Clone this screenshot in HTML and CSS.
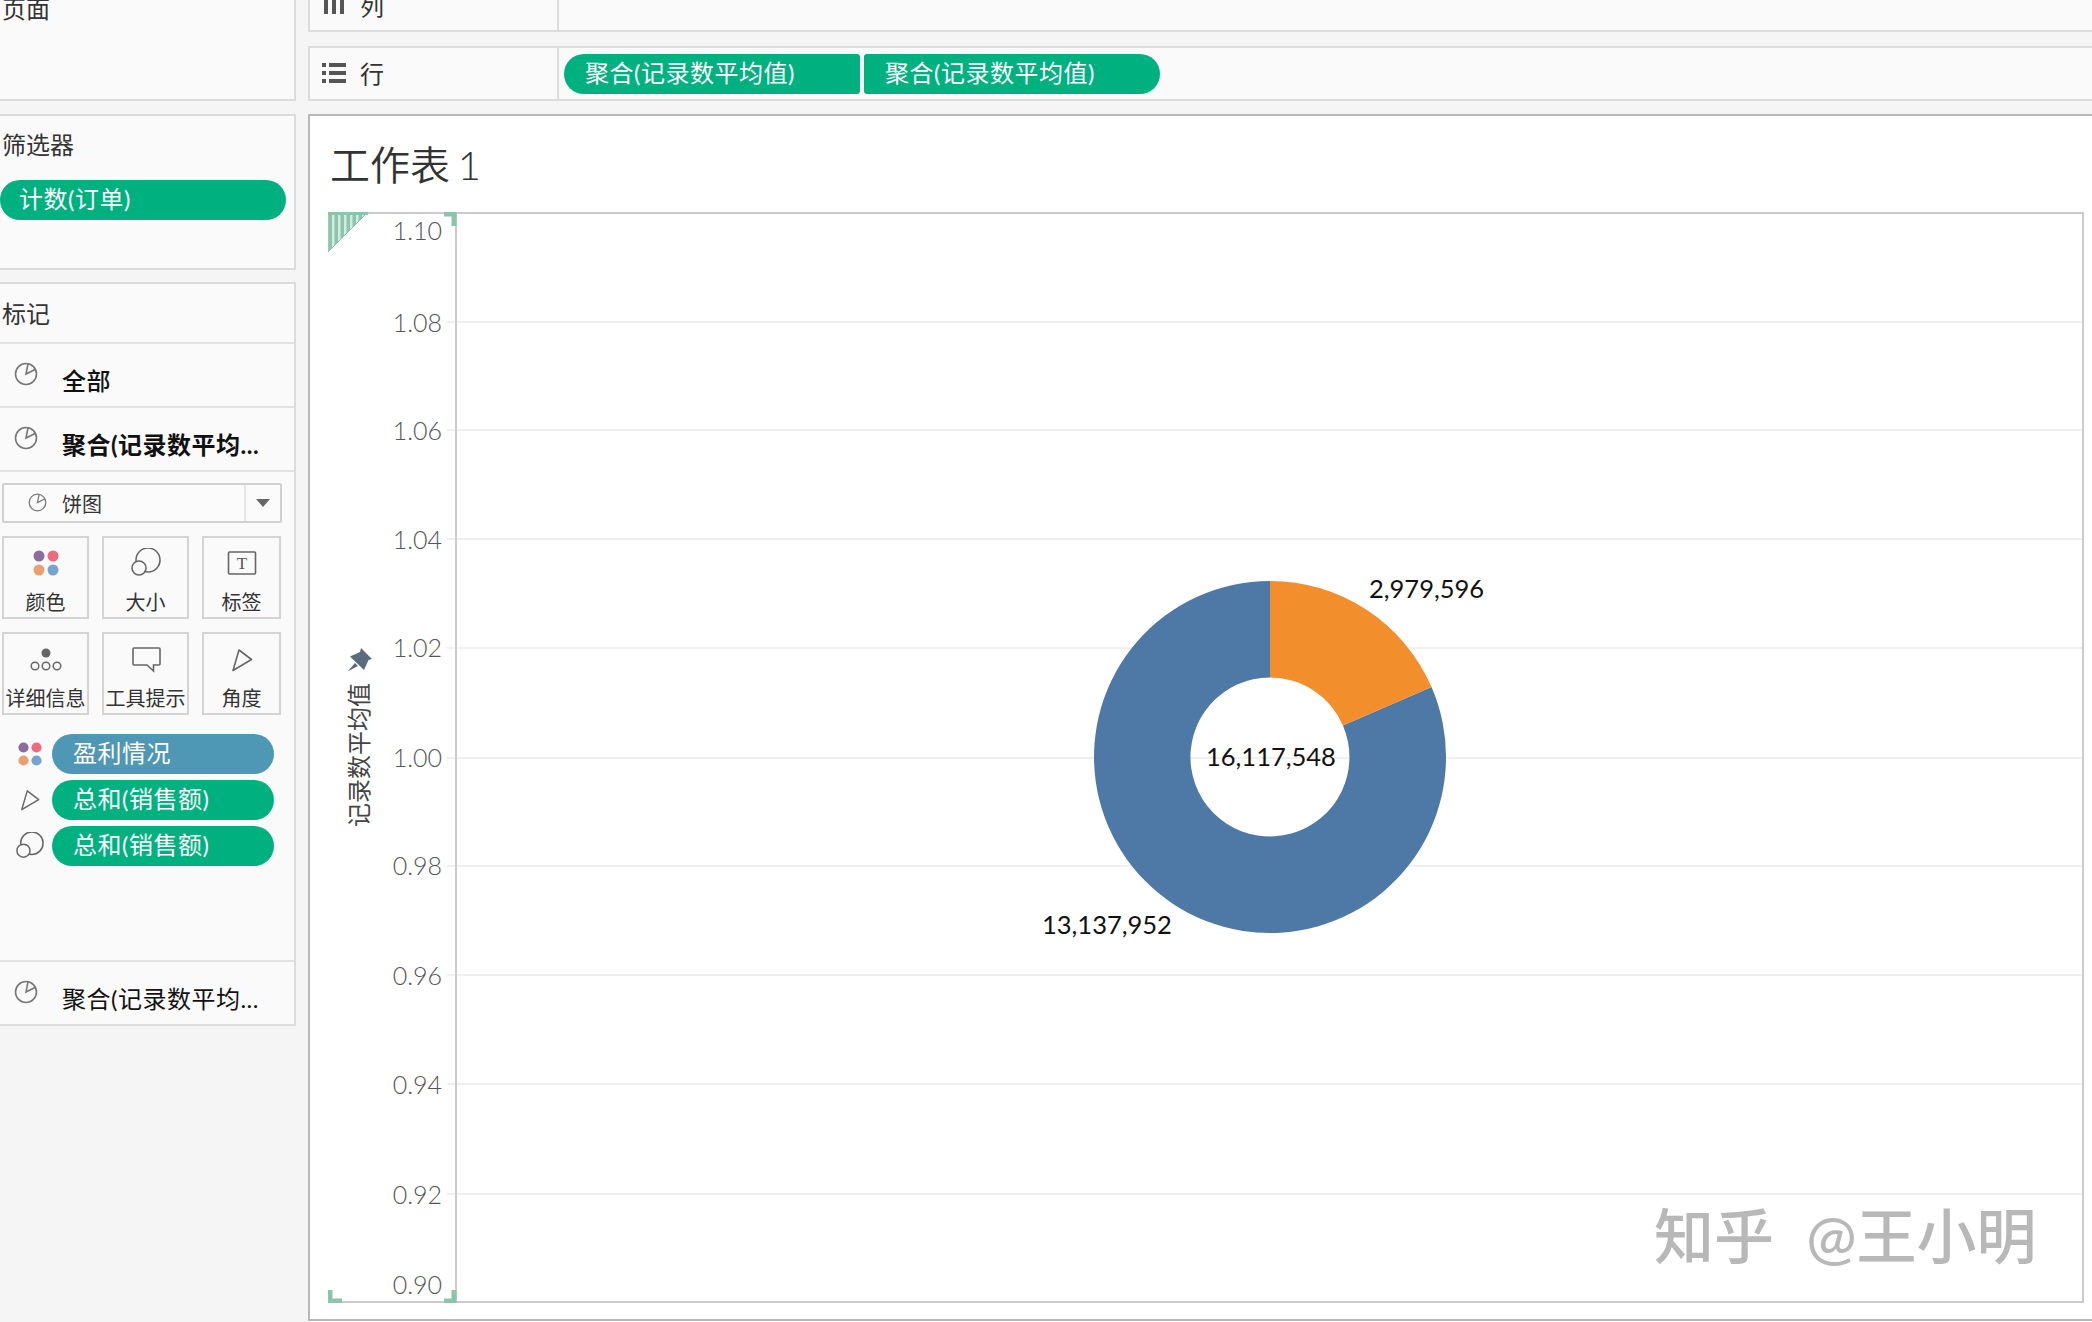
FILE: index.html
```html
<!DOCTYPE html>
<html lang="zh-CN">
<head>
  <meta charset="UTF-8" />
  <title>工作表 1</title>
  <link rel="stylesheet" href="styles.css">
</head>
<body>
  <svg class="icon-defs" xmlns="http://www.w3.org/2000/svg">
    <symbol id="i-pie" viewBox="0 0 24 24">
      <circle cx="12" cy="12" r="10.5" fill="none" stroke="#777" stroke-width="1.6"/>
      <path d="M14 1.8L12 12L21.5 7.2" fill="none" stroke="#777" stroke-width="1.6"/>
    </symbol>
    <symbol id="i-color" viewBox="0 0 28 28">
      <circle cx="7" cy="7" r="5.5" fill="#8a6f9e"/>
      <circle cx="21" cy="7" r="5.5" fill="#ee6a7d"/>
      <circle cx="7" cy="21" r="5.5" fill="#eda06f"/>
      <circle cx="21" cy="21" r="5.5" fill="#78a2cf"/>
    </symbol>
    <symbol id="i-size" viewBox="0 0 30 30">
      <circle cx="17" cy="12" r="12" fill="none" stroke="#666" stroke-width="1.6"/>
      <circle cx="8" cy="20" r="7" fill="#fafafa" stroke="#666" stroke-width="1.6"/>
    </symbol>
    <symbol id="i-angle" viewBox="0 0 24 26">
      <path d="M3 23.5L9 3L21.5 12.5Z" fill="none" stroke="#666" stroke-width="1.6" stroke-linejoin="round"/>
    </symbol>
  </svg>

  <div class="app">
    <aside class="sidebar">
      <section class="panel panel-pages">
        <div class="panel-title">页面</div>
      </section>

      <section class="panel panel-filters">
        <div class="panel-title">筛选器</div>
        <div class="pill pill-filter">计数(订单)</div>
      </section>

      <section class="panel panel-marks">
        <div class="marks-head panel-title">标记</div>
        <div class="marks-row">
          <svg class="row-icon"><use href="#i-pie"/></svg>
          <span class="row-text row-all">全部</span>
        </div>
        <div class="marks-row">
          <svg class="row-icon"><use href="#i-pie"/></svg>
          <span class="row-text row-active">聚合(记录数平均...</span>
        </div>

        <div class="marks-body">
          <div class="mark-select">
            <div class="mark-select-value">
              <svg class="select-icon"><use href="#i-pie"/></svg>
              <span>饼图</span>
            </div>
            <div class="mark-select-arrow"></div>
          </div>

          <div class="mark-cards">
            <div class="mark-card">
              <svg class="card-icon" viewBox="0 0 30 30"><use href="#i-color" x="1" y="1" width="28" height="28"/></svg>
              <span>颜色</span>
            </div>
            <div class="mark-card">
              <svg class="card-icon" viewBox="0 0 30 30"><use href="#i-size" width="30" height="30"/></svg>
              <span>大小</span>
            </div>
            <div class="mark-card">
              <svg class="card-icon" viewBox="0 0 30 30">
                <rect x="1.5" y="4" width="27" height="22" rx="1" fill="none" stroke="#666" stroke-width="1.6"/>
                <text class="card-t" x="15" y="21" text-anchor="middle">T</text>
              </svg>
              <span>标签</span>
            </div>
            <div class="mark-card">
              <svg class="card-icon" viewBox="0 0 34 30">
                <circle cx="17" cy="8" r="4.5" fill="#666"/>
                <circle cx="6" cy="21" r="3.8" fill="none" stroke="#666" stroke-width="1.5"/>
                <circle cx="17" cy="21" r="3.8" fill="none" stroke="#666" stroke-width="1.5"/>
                <circle cx="28" cy="21" r="3.8" fill="none" stroke="#666" stroke-width="1.5"/>
              </svg>
              <span>详细信息</span>
            </div>
            <div class="mark-card">
              <svg class="card-icon" viewBox="0 0 30 30">
                <path d="M3 3H28Q29 3 29 4V19Q29 20 28 20H22.5V26L16 20H3Q2 20 2 19V4Q2 3 3 3Z" fill="none" stroke="#666" stroke-width="1.6"/>
              </svg>
              <span>工具提示</span>
            </div>
            <div class="mark-card">
              <svg class="card-icon" viewBox="0 0 30 30"><use href="#i-angle" x="3" y="2" width="24" height="26"/></svg>
              <span>角度</span>
            </div>
          </div>

          <div class="encodings">
            <div class="encoding">
              <svg class="encoding-icon"><use href="#i-color" x="1" y="1" width="26" height="26"/></svg>
              <div class="pill pill-dim">盈利情况</div>
            </div>
            <div class="encoding">
              <svg class="encoding-icon"><use href="#i-angle" x="3" y="2" width="22" height="24"/></svg>
              <div class="pill pill-measure">总和(销售额)</div>
            </div>
            <div class="encoding">
              <svg class="encoding-icon"><use href="#i-size" width="28" height="28"/></svg>
              <div class="pill pill-measure">总和(销售额)</div>
            </div>
          </div>
        </div>

        <div class="marks-row marks-row-last">
          <svg class="row-icon"><use href="#i-pie"/></svg>
          <span class="row-text">聚合(记录数平均...</span>
        </div>
      </section>
    </aside>

    <main class="main">
      <div class="shelf shelf-cols">
        <div class="shelf-label">
          <svg class="shelf-icon" viewBox="0 0 24 20">
            <path d="M2 0h4v20H2zM10 0h4v20h-4zM18 0h4v20h-4z" fill="#555"/>
          </svg>
          <span>列</span>
        </div>
        <div class="shelf-pills"></div>
      </div>

      <div class="shelf shelf-rows">
        <div class="shelf-label">
          <svg class="shelf-icon" viewBox="0 0 24 20">
            <path d="M0 0h4v4H0zM7 0h17v4H7zM0 8h4v4H0zM7 8h17v4H7zM0 16h4v4H0zM7 16h17v4H7z" fill="#555"/>
          </svg>
          <span>行</span>
        </div>
        <div class="shelf-pills">
          <div class="pill pill-measure pill-left">聚合(记录数平均值)</div>
          <div class="pill pill-measure pill-right">聚合(记录数平均值)</div>
        </div>
      </div>

      <section class="view">
        <h1 class="view-title">工作表 1</h1>
        <svg class="plot" viewBox="328 212 1756 1091" xmlns="http://www.w3.org/2000/svg">
          <defs>
            <pattern id="hatch" width="6" height="6" patternUnits="userSpaceOnUse">
              <rect width="6" height="6" fill="#8cc4ad"/>
              <rect x="2" width="2.5" height="6" fill="#d3eadf"/>
            </pattern>
          </defs>

          <g class="grid">
            <line x1="447" x2="2083" y1="322" y2="322"/>
            <line x1="447" x2="2083" y1="430" y2="430"/>
            <line x1="447" x2="2083" y1="539" y2="539"/>
            <line x1="447" x2="2083" y1="648" y2="648"/>
            <line x1="447" x2="2083" y1="758" y2="758"/>
            <line x1="447" x2="2083" y1="866" y2="866"/>
            <line x1="447" x2="2083" y1="975" y2="975"/>
            <line x1="447" x2="2083" y1="1084" y2="1084"/>
            <line x1="447" x2="2083" y1="1194" y2="1194"/>
          </g>

          <path class="frame" d="M328 213H2083V1302H328"/>
          <line class="frame" x1="456" x2="456" y1="212" y2="1302"/>

          <g class="axis-labels">
            <text x="442" y="240">1.10</text>
            <text x="442" y="332">1.08</text>
            <text x="442" y="440">1.06</text>
            <text x="442" y="549">1.04</text>
            <text x="442" y="657">1.02</text>
            <text x="442" y="767">1.00</text>
            <text x="442" y="875">0.98</text>
            <text x="442" y="985">0.96</text>
            <text x="442" y="1094">0.94</text>
            <text x="442" y="1204">0.92</text>
            <text x="442" y="1294">0.90</text>
          </g>

          <text class="axis-title" transform="translate(368 755) rotate(-90)" text-anchor="middle">记录数平均值</text>
          <path d="M361 648L372 659L368.5 660L364 670L350 656.5L360 652ZM355 663L347.5 671.5L358 666Z" fill="#5b6b80"/>

          <path d="M328 212H368L328 252Z" fill="url(#hatch)" stroke="#8cc4ad" stroke-width="1"/>
          <rect class="corner-fill" x="328" y="212" width="40" height="3"/>
          <path class="corner" d="M444 214H454V226"/>
          <path class="corner" d="M330 1290V1301H342"/>
          <path class="corner" d="M444 1301H454V1290"/>

          <path d="M1431.5 687A176 176 0 1 1 1270 581L1270 677.5A79.5 79.5 0 1 0 1342.9 725.4Z" fill="#4e79a7"/>
          <path d="M1270 581A176 176 0 0 1 1431.5 687L1342.9 725.4A79.5 79.5 0 0 0 1270 677.5Z" fill="#f28e2b"/>

          <g class="data-labels">
            <text x="1369" y="598">2,979,596</text>
            <text x="1206" y="766">16,117,548</text>
            <text x="1042" y="934">13,137,952</text>
          </g>

          <text class="watermark" x="1654" y="1259">知乎 @王小明</text>
        </svg>
      </section>
    </main>
  </div>
</body>
</html>
```

FILE: styles.css
```css
* {
  margin: 0;
  padding: 0;
  box-sizing: border-box;
}
body {
  font-family: Lato, "Noto Sans CJK SC", sans-serif;
  background: #f5f5f5;
  color: #333;
  font-size: 24px;
  overflow: hidden;
}
.icon-defs {
  position: absolute;
  width: 0;
  height: 0;
}
.app {
  display: flex;
  gap: 12px;
  height: 1322px;
  overflow: hidden;
}

/* left column */
.sidebar {
  width: 296px;
  flex-shrink: 0;
  display: flex;
  flex-direction: column;
}
.panel {
  background: #fafafa;
  border: 2px solid #dcdcdc;
  border-left: none;
}
.panel-title {
  padding-left: 2px;
  line-height: 34px;
}
.panel-pages {
  height: 101px;
  border-top: none;
}
.panel-pages .panel-title {
  margin-top: -8px;
}
.panel-filters {
  height: 156px;
  margin-top: 13px;
}
.panel-filters .panel-title {
  margin-top: 12px;
}
.panel-marks {
  height: 744px;
  margin-top: 12px;
  display: flex;
  flex-direction: column;
}
.marks-head {
  height: 60px;
  line-height: 60px;
  border-bottom: 2px solid #e3e3e3;
}
.marks-row {
  height: 64px;
  display: flex;
  align-items: center;
  gap: 24px;
  padding-left: 14px;
  border-bottom: 2px solid #e3e3e3;
  color: #111;
}
.marks-row-last {
  height: 64px;
  border-bottom: none;
  border-top: 2px solid #e3e3e3;
}
.row-icon {
  width: 24px;
  height: 24px;
  margin-top: -2px;
}
.row-text {
  margin-top: 8px;
  letter-spacing: 0.5px;
}
.row-all {
  font-weight: 500;
}
.row-active {
  font-weight: 700;
}
.marks-body {
  flex: 1;
  padding: 11px 12px 0 2px;
}
.mark-select {
  height: 40px;
  display: flex;
  background: #fbfbfb;
  border: 2px solid #d0d0d0;
  border-radius: 2px;
  font-size: 20px;
}
.mark-select-value {
  flex: 1;
  display: flex;
  align-items: center;
  gap: 15px;
  padding-left: 24px;
  border-right: 2px solid #e6e6e6;
}
.select-icon {
  width: 19px;
  height: 19px;
  margin-top: -2px;
}
.mark-select-arrow {
  width: 34px;
  position: relative;
}
.mark-select-arrow::after {
  content: "";
  position: absolute;
  left: 10px;
  top: 14px;
  border: 7px solid transparent;
  border-top: 8px solid #666;
  border-bottom: none;
}
.mark-cards {
  display: grid;
  grid-template-columns: 87px 87px 79px;
  grid-auto-rows: 83px;
  gap: 13px;
  margin-top: 13px;
}
.mark-card {
  border: 2px solid #d4d4d4;
  display: flex;
  flex-direction: column;
  align-items: center;
  font-size: 20px;
  line-height: 26px;
  color: #333;
  white-space: nowrap;
}
.card-icon {
  width: 30px;
  height: 30px;
  margin: 10px 0 11px;
  flex-shrink: 0;
}
.mark-card:nth-child(n+4) .card-icon {
  margin: 11px 0 10px;
}
.mark-card:nth-child(4) .card-icon {
  width: 34px;
}
.card-t {
  font-family: "Liberation Serif", serif;
  font-size: 17px;
  fill: #555;
}
.encodings {
  margin-top: 19px;
  display: flex;
  flex-direction: column;
  gap: 6px;
}
.encoding {
  display: flex;
  align-items: center;
  gap: 8px;
  padding-left: 14px;
}
.encoding-icon {
  width: 28px;
  height: 28px;
  flex-shrink: 0;
}

/* pills */
.pill {
  height: 40px;
  line-height: 38px;
  border-radius: 20px;
  color: #fff;
  padding-left: 21px;
  white-space: nowrap;
  letter-spacing: 0.5px;
}
.pill-filter {
  width: 286px;
  margin-top: 18px;
  padding-left: 19px;
  background: #00b180;
}
.pill-measure {
  background: #00b180;
  width: 222px;
}
.pill-dim {
  background: #4e97b5;
  width: 222px;
}
.pill-left {
  width: 296px;
  border-radius: 20px 3px 3px 20px;
}
.pill-right {
  width: 296px;
  border-radius: 3px 20px 20px 3px;
}

/* shelves */
.main {
  flex: 1;
  display: flex;
  flex-direction: column;
  min-width: 0;
}
.shelf {
  display: flex;
  background: #fafafa;
  border-bottom: 2px solid #dcdcdc;
}
.shelf-cols {
  height: 32px;
}
.shelf-rows {
  height: 55px;
  margin-top: 14px;
  border-top: 2px solid #dcdcdc;
}
.shelf-label {
  width: 251px;
  display: flex;
  align-items: center;
  gap: 14px;
  padding-left: 12px;
  border-left: 2px solid #dcdcdc;
  border-right: 2px solid #dcdcdc;
}
.shelf-label > * {
  margin-top: -2px;
}
.shelf-cols .shelf-label > * {
  margin-top: -22px;
}
.shelf-icon {
  width: 24px;
  height: 20px;
}
.shelf-pills {
  display: flex;
  align-items: center;
  gap: 4px;
  padding-left: 5px;
}

/* worksheet */
.view {
  flex: 1;
  margin-top: 13px;
  margin-bottom: 1px;
  background: #fff;
  border: 2px solid #b8b8b8;
  border-right: none;
}
.view-title {
  font-size: 40px;
  font-weight: 350;
  line-height: 40px;
  word-spacing: -3px;
  margin: 29px 0 27px 20px;
  color: #333;
}
.plot {
  display: block;
  width: 1756px;
  height: 1091px;
  margin-left: 18px;
}
.grid line {
  stroke: #f0f0f0;
  stroke-width: 2;
}
.frame {
  fill: none;
  stroke: #cbcbcb;
  stroke-width: 2;
}
.corner {
  fill: none;
  stroke: #8cc4ad;
  stroke-width: 5;
}
.corner-fill {
  fill: #8cc4ad;
}
.axis-labels text {
  font-size: 25px;
  font-weight: 300;
  fill: #555;
  text-anchor: end;
}
.axis-title {
  font-size: 24px;
  fill: #444;
}
.data-labels text {
  font-size: 25.5px;
  fill: #111;
}
.watermark {
  font-size: 60px;
  font-weight: 500;
  fill: #b8b8b8;
  word-spacing: 17px;
}
```
